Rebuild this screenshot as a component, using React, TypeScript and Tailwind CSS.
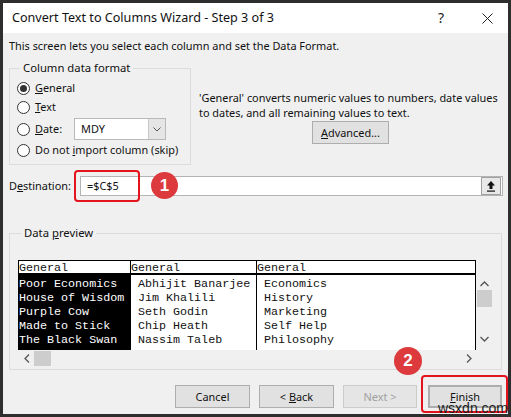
import React from 'react'

const rows = [
  ['Poor Economics', 'Abhijit Banarjee', 'Economics'],
  ['House of Wisdom', 'Jim Khalili', 'History'],
  ['Purple Cow', 'Seth Godin', 'Marketing'],
  ['Made to Stick', 'Chip Heath', 'Self Help'],
  ['The Black Swan', 'Nassim Taleb', 'Philosophy'],
]

function Radio({ checked, children }: { checked?: boolean; children: React.ReactNode }) {
  return (
    <div className="flex items-center h-[18px]">
      <span className="w-[13px] h-[13px] rounded-full border border-[#333] bg-white flex items-center justify-center shrink-0">
        {checked && <span className="w-[7px] h-[7px] rounded-full bg-[#333]" />}
      </span>
      <span className="ml-[5px] whitespace-nowrap">{children}</span>
    </div>
  )
}

function Btn({ children, className = '' }: { children: React.ReactNode; className?: string }) {
  return (
    <div className={`h-[23px] flex items-center justify-center border border-[#adadad] bg-[#e1e1e1] whitespace-nowrap ${className}`}>
      {children}
    </div>
  )
}

export default function App() {
  return (
    <div className="w-[511px] h-[417px] relative flex flex-col border-[3px] border-[#2e2e2e] bg-[#f0f0f0] text-[10.9px] leading-[14px] text-[#111] font-['Noto_Sans',sans-serif] overflow-hidden">
      {/* title bar */}
      <div className="h-[30px] bg-white flex items-center pl-[9px] shrink-0">
        <span className="text-[12.6px] text-[#111]">Convert Text to Columns Wizard - Step 3 of 3</span>
        <span className="ml-auto text-[14px] text-[#222] mr-[38px]">?</span>
        <svg width="11" height="11" viewBox="0 0 11 11" className="mr-[15px]">
          <path d="M0.5 0.5 L10.5 10.5 M10.5 0.5 L0.5 10.5" stroke="#222" strokeWidth="1" />
        </svg>
      </div>

      <div className="flex flex-col pl-[6px] pr-[5px]">
        <div className="mt-[6px] whitespace-nowrap">This screen lets you select each column and set the Data Format.</div>

        {/* format group + description */}
        <div className="flex mt-[7px]">
          <fieldset className="w-[182px] h-[105px] shrink-0 border border-[#dcdcdc] pl-[7px] pr-0 pb-[2px]">
            <legend className="ml-[3px] px-[3px] leading-[16px] text-[11.3px]">Column data format</legend>
            <div className="mt-[3px]">
              <Radio checked><u>G</u>eneral</Radio>
              <div className="mt-[1px]">
                <Radio><u>T</u>ext</Radio>
              </div>
              <div className="flex items-center h-[22px] mt-[2px]">
                <div className="w-[57px] shrink-0">
                  <Radio><u>D</u>ate:</Radio>
                </div>
                <div className="w-[92px] h-[22px] border border-[#b9b9b9] bg-white flex items-center">
                  <span className="pl-[6px] flex-1">MDY</span>
                  <div className="w-[17px] h-full bg-[#e5e5e5] border-l border-[#c8c8c8] flex items-center justify-center">
                    <svg width="8" height="5" viewBox="0 0 8 5">
                      <path d="M0.5 0.5 L4 4 L7.5 0.5" stroke="#555" strokeWidth="1" fill="none" />
                    </svg>
                  </div>
                </div>
              </div>
              <div className="mt-[1px]">
                <Radio>Do not <u>i</u>mport column (skip)</Radio>
              </div>
            </div>
          </fieldset>
          <div className="ml-[8px] flex flex-col pt-[30px] leading-[15px] whitespace-nowrap">
            <div>'General' converts numeric values to numbers, date values</div>
            <div>to dates, and all remaining values to text.</div>
            <Btn className="w-[77px] mt-[1px] ml-[113px]"><span><u>A</u>dvanced...</span></Btn>
          </div>
        </div>

        {/* destination */}
        <div className="flex items-center h-[20px] mt-[11px]">
          <span className="w-[71px] shrink-0 whitespace-nowrap">D<u>e</u>stination:</span>
          <div className="flex-1 h-[20px] border border-[#b4b4b4] bg-white flex items-center">
            <span className="pl-[6px] flex-1">=$C$5</span>
            <div className="w-[20px] h-[18px] mr-[1px] border border-[#a0a0a0] bg-[#e8e8e8] flex items-center justify-center">
              <svg width="10" height="12" viewBox="0 0 10 12">
                <path d="M5 1 L9 5.5 H6.5 V9 H3.5 V5.5 H1 Z" fill="#111" />
                <rect x="1" y="10.5" width="8" height="1.2" fill="#111" />
              </svg>
            </div>
          </div>
        </div>

        {/* data preview */}
        <fieldset className="mt-[29px] w-[493px] h-[145px] border border-[#dcdcdc] pl-[8px] pr-[7px]">
          <legend className="ml-[3px] px-[3px] leading-[16px] text-[11.3px]">Data <u>p</u>review</legend>
          <div className="mt-[19px] flex flex-col font-['Liberation_Mono',monospace] text-[11.7px] leading-[14px]">
            <div className="flex">
              <div className="w-[458px] h-[90px] border-t border-l border-r border-black bg-white flex">
                {[0, 1, 2].map((c) => (
                  <div
                    key={c}
                    className={`flex flex-col ${c === 0 ? 'w-[111px]' : c === 1 ? 'w-[126px] border-l border-black' : 'flex-1 border-l border-black'}`}
                  >
                    <div className="h-[14px] border-b-2 border-black overflow-hidden leading-[15px]">General</div>
                    <div className={`flex-1 pt-[2px] ${c === 0 ? 'bg-black text-white' : 'text-[#111]'}`}>
                      {rows.map((r, i) => (
                        <div key={i} className={`whitespace-pre ${c === 0 ? '' : 'pl-[7px]'}`}>{r[c]}</div>
                      ))}
                    </div>
                  </div>
                ))}
              </div>
              <div className="w-[17px] h-[90px] flex flex-col items-center">
                <svg width="9" height="6" viewBox="0 0 9 6" className="mt-[21px]">
                  <path d="M0.5 5 L4.5 1 L8.5 5" stroke="#555" strokeWidth="1.3" fill="none" />
                </svg>
                <div className="w-[15px] h-[17px] bg-[#cdcdcd] mt-[3px]" />
                <svg width="9" height="6" viewBox="0 0 9 6" className="mt-[29px]">
                  <path d="M0.5 1 L4.5 5 L8.5 1" stroke="#555" strokeWidth="1.3" fill="none" />
                </svg>
              </div>
            </div>
            <div className="h-[17px] w-[458px] flex items-center">
              <svg width="6" height="9" viewBox="0 0 6 9" className="ml-[6px]">
                <path d="M5 0.5 L1 4.5 L5 8.5" stroke="#555" strokeWidth="1.3" fill="none" />
              </svg>
              <div className="w-[17px] h-[15px] bg-[#cdcdcd] ml-[4px]" />
              <svg width="6" height="9" viewBox="0 0 6 9" className="ml-auto mr-[4px]">
                <path d="M1 0.5 L5 4.5 L1 8.5" stroke="#555" strokeWidth="1.3" fill="none" />
              </svg>
            </div>
          </div>
        </fieldset>

        {/* buttons */}
        <div className="flex mt-[15px] pl-[166px]">
          <Btn className="w-[75px]">Cancel</Btn>
          <Btn className="w-[75px] ml-[9px]"><span>&lt; <u>B</u>ack</span></Btn>
          <Btn className="w-[74px] ml-[9px] border-[#cccccc] bg-[#e5e5e5] text-[#a0a0a0]">Next &gt;</Btn>
          <Btn className="w-[74px] ml-[11px] border-2 border-[#0078d7]"><span><u>F</u>inish</span></Btn>
        </div>
      </div>

      {/* annotations */}
      <div className="absolute left-[71px] top-[167px] w-[66px] h-[32px] border-2 border-[#e3141e] rounded-[4px]" />
      <div className="absolute left-[148px] top-[169px] w-[27px] h-[27px] rounded-full bg-[#dc3a3c] text-white font-bold text-[17px] flex items-center justify-center font-['Liberation_Sans',sans-serif]">1</div>
      <div className="absolute left-[418px] top-[372px] w-[87px] h-[38px] border-2 border-[#e3141e] rounded-[4px]" />
      <div className="absolute left-[391px] top-[344px] w-[28px] h-[28px] rounded-full bg-[#dc3a3c] text-white font-bold text-[17px] flex items-center justify-center font-['Liberation_Sans',sans-serif]">2</div>
      <div className="absolute left-[435px] top-[398px] text-[14px] leading-[14px] text-[#1c1c1c] font-['Liberation_Sans',sans-serif]">wsxdn.com</div>
    </div>
  )
}
